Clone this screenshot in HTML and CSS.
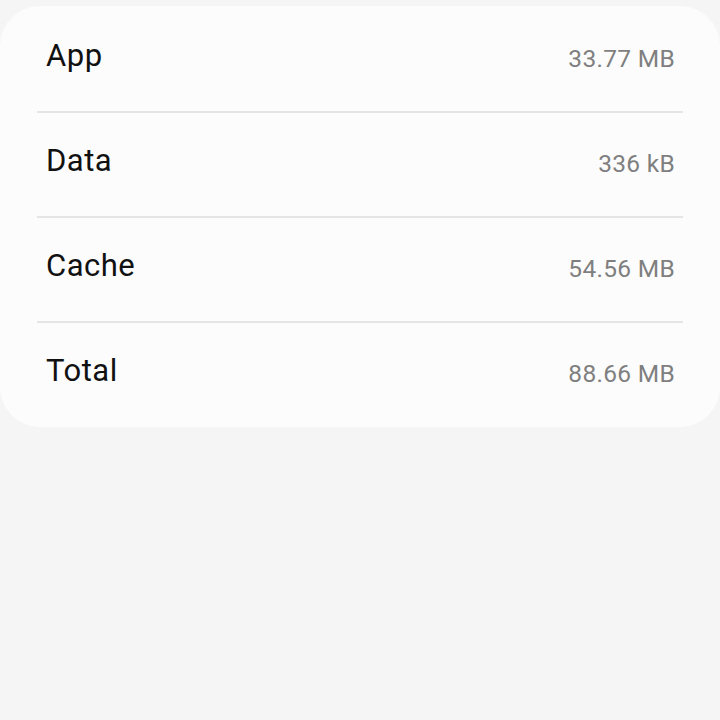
FILE: index.html
```html
<!DOCTYPE html>
<html>
<head>
<meta charset="utf-8">
<link rel="stylesheet" href="styles.css">
</head>
<body>
<div class="card">
  <div class="row"><span class="label">App</span><span class="value">33.77 MB</span></div>
  <div class="divider"></div>
  <div class="row"><span class="label">Data</span><span class="value">336 kB</span></div>
  <div class="divider"></div>
  <div class="row"><span class="label">Cache</span><span class="value">54.56 MB</span></div>
  <div class="divider"></div>
  <div class="row"><span class="label">Total</span><span class="value">88.66 MB</span></div>
</div>
</body>
</html>
```
FILE: styles.css
```css
html, body {
  margin: 0;
  padding: 0;
  background: #f5f5f5;
  font-family: Roboto, "Liberation Sans", sans-serif;
}
body {
  padding-top: 6px;
  height: 714px;
}
.card {
  background: #fcfcfc;
  border-radius: 40px;
  padding: 2px 37px 1px;
}
.row {
  height: 103px;
  display: flex;
  align-items: center;
  justify-content: space-between;
}
.label {
  font-size: 31px;
  line-height: 36px;
  letter-spacing: 0.5px;
  color: #111111;
  margin-left: 9px;
  margin-bottom: 8px;
}
.value {
  font-size: 24.5px;
  line-height: 29px;
  letter-spacing: 0.3px;
  color: #7f7f7f;
  margin-right: 8px;
  margin-bottom: 2px;
}
.divider {
  height: 2px;
  background: #e5e5e5;
}
```
